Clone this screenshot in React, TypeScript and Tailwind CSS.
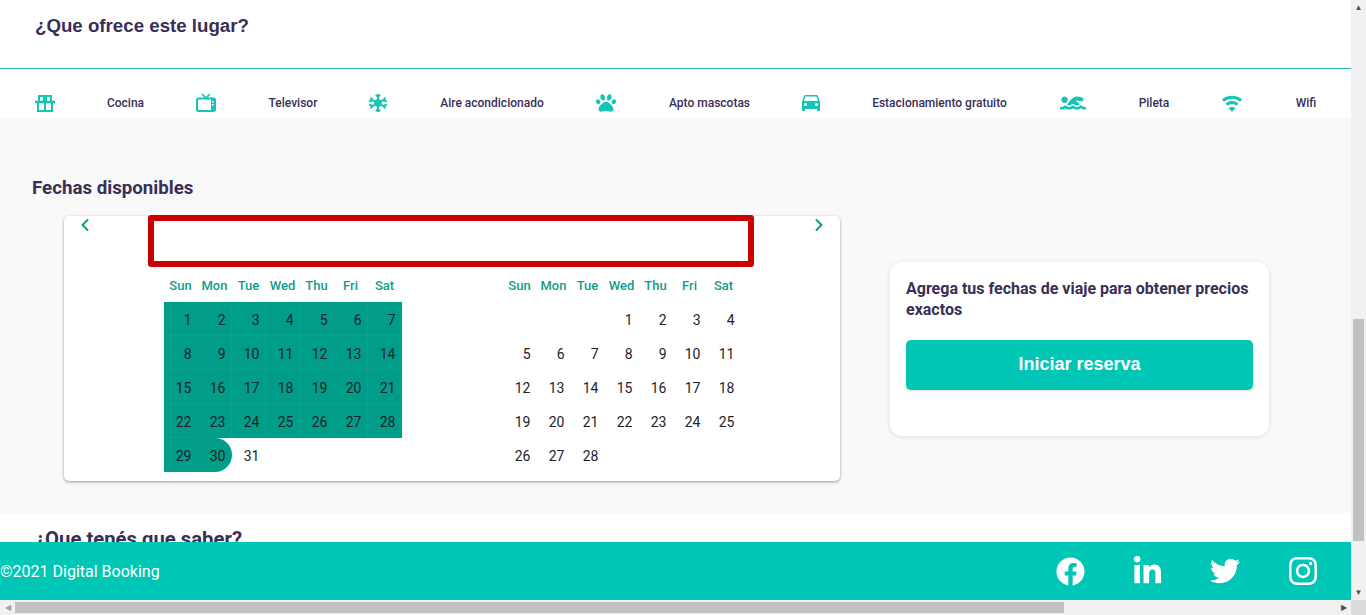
import { FaFacebook, FaInstagram, FaLinkedinIn, FaPaw, FaSwimmer, FaTwitter } from "react-icons/fa";
import { MdDirectionsCar } from "react-icons/md";
import { FiChevronLeft, FiChevronRight } from "react-icons/fi";
import type { ReactNode } from "react";

const GiftIcon = () => (
  <svg width="20" height="17" viewBox="0 0 20 17" fill="none" stroke="currentColor" strokeWidth="2">
    <path d="M0 7h20" strokeWidth="2.6" />
    <path d="M3 8v8h14V8M10 4v12" />
    <path d="M4 7V1h5v5M11 6V1h5v6" />
  </svg>
);

const TvIcon = () => (
  <svg width="20" height="19" viewBox="0 0 20 19" fill="none">
    <path d="M6 1l4 4 4-4" stroke="currentColor" strokeWidth="1.6" />
    <rect x="1" y="5.5" width="18" height="12.5" rx="1.5" stroke="currentColor" strokeWidth="2" />
    <rect x="15" y="6" width="3.5" height="11.5" fill="currentColor" />
    <rect x="16" y="8" width="1.6" height="1.6" fill="#fff" />
    <rect x="16" y="11" width="1.6" height="1.6" fill="#fff" />
  </svg>
);

const SnowIcon = () => (
  <svg width="20" height="20" viewBox="0 0 20 20" fill="none" stroke="currentColor" strokeWidth="1.8">
    <path d="M10 1v18M2.2 5.5l15.6 9M17.8 5.5l-15.6 9" />
    <path d="M7.8 1.8L10 4l2.2-2.2M7.8 18.2L10 16l2.2 2.2" />
    <path d="M1 8.4l3-.8-.8-3M19 11.6l-3 .8.8 3M16.8 4.6l-.8 3 3 .8M3.2 15.4l.8-3-3-.8" />
    <path d="M10 6.5l3 1.7v3.6l-3 1.7-3-1.7V8.2z" />
  </svg>
);

const WifiIcon = () => (
  <svg width="20" height="17" viewBox="0 0 20 17" fill="none">
    <path d="M1 5.5C6 1.2 14 1.2 19 5.5" stroke="currentColor" strokeWidth="3" />
    <path d="M4.5 9.5C8 6.9 12 6.9 15.5 9.5" stroke="currentColor" strokeWidth="3" />
    <path d="M6.5 13C8.5 11.7 11.5 11.7 13.5 13L10 17z" fill="currentColor" />
  </svg>
);

const features: { icon: ReactNode; label: string; iconW: string; textW: string }[] = [
  { icon: <GiftIcon />, label: "Cocina", iconW: "w-[40px]", textW: "w-[121px]" },
  { icon: <TvIcon />, label: "Televisor", iconW: "w-[40px] -mt-[1px]", textW: "w-[134px]" },
  { icon: <SnowIcon />, label: "Aire acondicionado", iconW: "w-[36px]", textW: "w-[192px]" },
  { icon: <FaPaw size={20} />, label: "Apto mascotas", iconW: "w-[36px]", textW: "w-[171px]" },
  { icon: <MdDirectionsCar size={24} />, label: "Estacionamiento gratuito", iconW: "w-[32px] -mt-[2px]", textW: "w-[225px]" },
  { icon: <FaSwimmer size={26} />, label: "Pileta", iconW: "w-[42px]", textW: "w-[120px]" },
  { icon: <WifiIcon />, label: "Wifi", iconW: "w-[36px]", textW: "w-[80px] ml-[16px]" },
];

const weekDays = ["Sun", "Mon", "Tue", "Wed", "Thu", "Fri", "Sat"];

const Month = ({ offset, days, selectedUntil }: { offset: number; days: number; selectedUntil: number }) => {
  const cells: (number | null)[] = [...Array(offset).fill(null)];
  for (let d = 1; d <= days; d++) cells.push(d);
  return (
    <div className="w-[238px]">
      <div className="grid grid-cols-[repeat(7,34px)] h-[18px] mb-[7px] ml-[-0.5px]">
        {weekDays.map((d) => (
          <div key={d} className="text-center text-[13px] leading-[18px] font-medium text-[#0f9d8a]">
            {d}
          </div>
        ))}
      </div>
      <div className="grid grid-cols-[repeat(7,34px)] auto-rows-[34px]">
        {cells.map((d, i) => {
          const selected = d !== null && d <= selectedUntil;
          const last = d === selectedUntil;
          return (
            <div
              key={i}
              className={`flex items-center justify-end pr-[6.5px] pt-[2px] text-sm text-[#1f2328] ${
                selected ? "bg-[#009d88] shadow-[0_0_1px_rgba(111,227,210,0.45)]" : ""
              } ${last ? "rounded-r-[17px]" : ""}`}
            >
              {d}
            </div>
          );
        })}
      </div>
    </div>
  );
};

export default function App() {
  return (
    <div className="w-[1366px] h-[615px] overflow-hidden flex flex-col font-['Roboto',sans-serif] bg-white">
      <div className="flex h-[600px]">
        <div className="w-[1351px] flex flex-col overflow-hidden">
          <div className="h-[118px] shrink-0 bg-white">
            <h2 className="h-[69px] border-b border-[#2fb3ab] pl-[35px] pt-[14px] font-['Liberation_Sans',sans-serif] font-bold text-[18.7px] leading-[24px] text-[#3a2e57]">
              ¿Que ofrece este lugar?
            </h2>
            <div className="flex items-center h-[48px] pl-[25px] pt-[20px]">
              {features.map((f) => (
                <div key={f.label} className="flex items-center">
                  <div className={`${f.iconW} flex justify-center text-[#14c4b4]`}>{f.icon}</div>
                  <div className={`${f.textW} text-center text-[12px] font-medium text-[#3a2e57]`}>{f.label}</div>
                </div>
              ))}
            </div>
          </div>

          <div className="h-[395px] shrink-0 bg-[#f9f9f9] pt-[59px] pl-[32px]">
            <h3 className="text-[18.72px] leading-[22px] font-bold text-[#3a2e57]">Fechas disponibles</h3>
            <div className="flex mt-[17px] pl-[32px]">
              <div className="relative w-[776px] h-[265px] rounded-[5px] bg-white shadow-[0_1px_3px_rgba(70,60,110,0.55)]">
                <FiChevronLeft size={20} className="absolute left-[11px] top-[-1px] text-[#0f9d8a]" strokeWidth={2.4} />
                <FiChevronRight size={20} className="absolute right-[11px] top-[-1px] text-[#0f9d8a]" strokeWidth={2.4} />
                <div className="absolute left-[84px] top-[-1px] w-[606px] h-[52px] border-[6px] border-[#cc0000] rounded-[3px] bg-white" />
                <div className="flex gap-[101px] pl-[100px] pt-[61px]">
                  <Month offset={0} days={31} selectedUntil={30} />
                  <Month offset={3} days={28} selectedUntil={0} />
                </div>
              </div>
              <div className="ml-[50px] mt-[46px] w-[379px] h-[174px] rounded-[12px] bg-white shadow-[0_1px_5px_rgba(0,0,0,0.12)] px-[16px] pt-[16px]">
                <p className="text-[16px] leading-[21px] font-bold text-[#3a2e57]">
                  Agrega tus fechas de viaje para obtener precios exactos
                </p>
                <button className="mt-[20px] w-[347px] h-[50px] pb-[2px] rounded-[5px] bg-[#00c6b6] shadow-[0_1px_3px_rgba(0,0,0,0.15)] text-white font-['Liberation_Sans',sans-serif] font-bold text-[18px]">
                  Iniciar reserva
                </button>
              </div>
            </div>
          </div>

          <div className="h-[29px] shrink-0 bg-white pl-[35px] pt-[14px] overflow-hidden">
            <h2 className="text-[20.3px] leading-[24px] font-bold text-[#3a2e57]">¿Que tenés que saber?</h2>
          </div>

          <div className="h-[58px] shrink-0 bg-[#00c6b6] flex items-center justify-between text-white">
            <span className="text-[16px] pt-[2px]">©2021 Digital Booking</span>
            <div className="flex items-center gap-[47px] pr-[32px]">
              <FaFacebook size={29} />
              <FaLinkedinIn size={31} />
              <FaTwitter size={30} />
              <FaInstagram size={32} />
            </div>
          </div>
        </div>

        {/* vertical scrollbar */}
        <div className="w-[15px] bg-[#f1f1f1] flex flex-col justify-between">
          <div className="h-[15px] flex items-center justify-center text-[#505050] text-[8px] leading-none">▲</div>
          <div className="flex-1 pt-[304px] px-[2px]">
            <div className="h-[222px] bg-[#c1c1c1]" />
          </div>
          <div className="h-[15px] flex items-center justify-center text-[#505050] text-[8px] leading-none">▼</div>
        </div>
      </div>

      {/* horizontal scrollbar */}
      <div className="h-[15px] flex bg-[#f1f1f1]">
        <div className="w-[15px] flex items-center justify-center text-[#a3a3a3] text-[8px] leading-none">◀</div>
        <div className="w-[1049px] h-[11px] mt-[2px] bg-[#c1c1c1]" />
        <div className="w-[272px]" />
        <div className="w-[15px] flex items-center justify-center text-[#505050] text-[8px] leading-none">▶</div>
        <div className="w-[15px] bg-[#dcdcdc]" />
      </div>
    </div>
  );
}
